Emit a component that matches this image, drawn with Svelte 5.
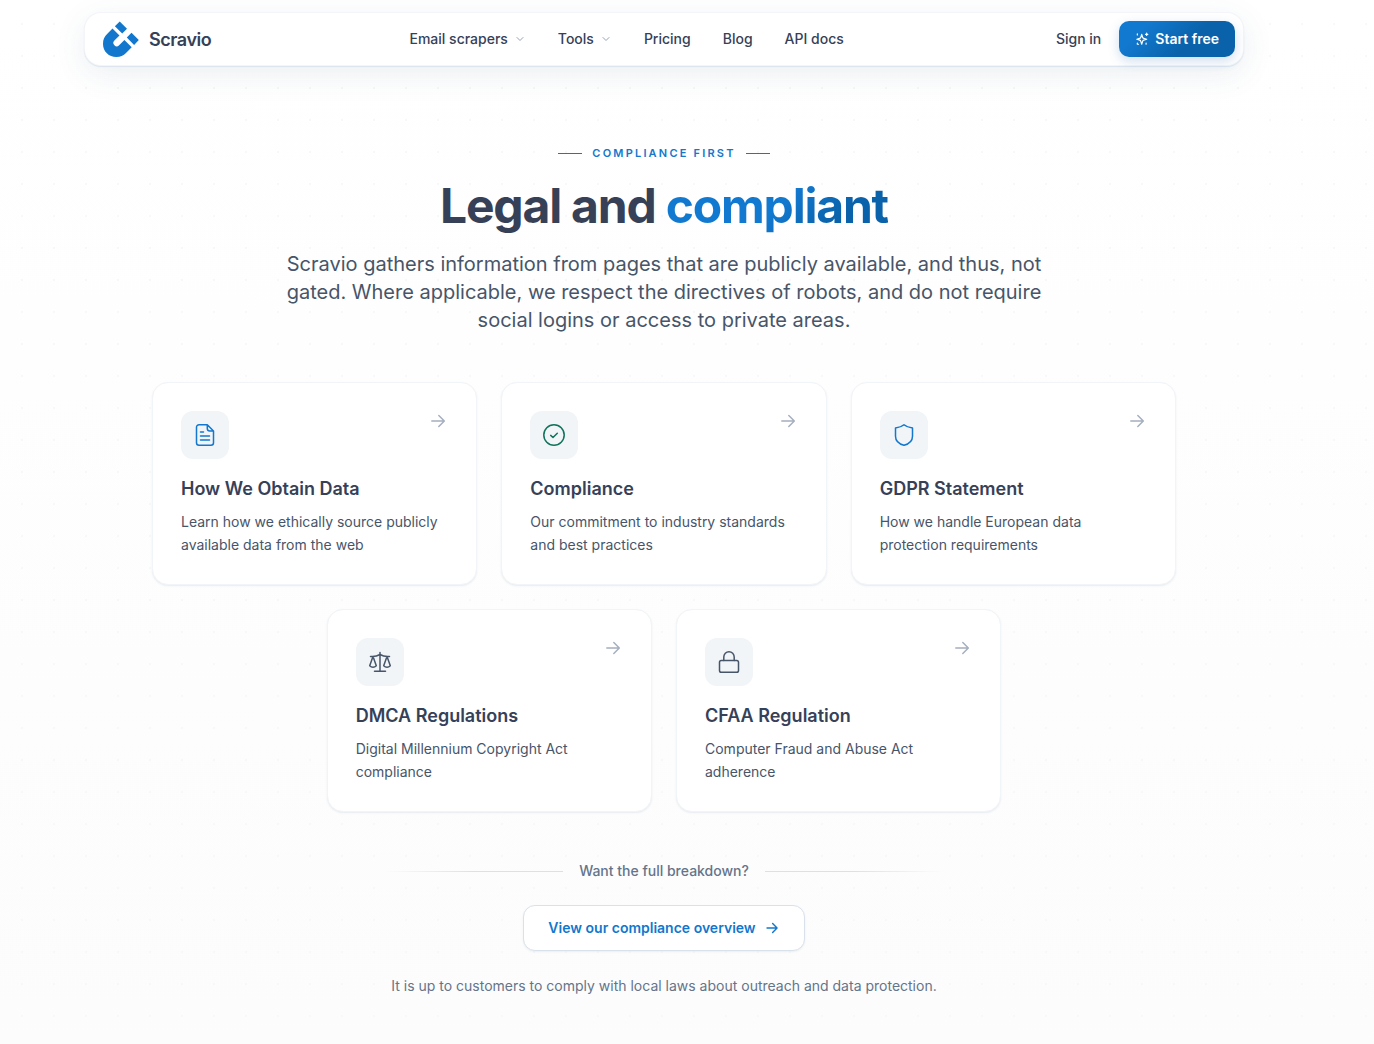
<script>
  const nav = [
    { label: 'Email scrapers', menu: true },
    { label: 'Tools', menu: true },
    { label: 'Pricing' },
    { label: 'Blog' },
    { label: 'API docs' }
  ];

  const cards = [
    { icon: 'file', tone: 'blue', title: 'How We Obtain Data', text: 'Learn how we ethically source publicly available data from the web' },
    { icon: 'check', tone: 'green', title: 'Compliance', text: 'Our commitment to industry standards and best practices' },
    { icon: 'shield', tone: 'blue', title: 'GDPR Statement', text: 'How we handle European data protection requirements' },
    { icon: 'scale', tone: 'slate', title: 'DMCA Regulations', text: 'Digital Millennium Copyright Act compliance' },
    { icon: 'lock', tone: 'slate', title: 'CFAA Regulation', text: 'Computer Fraud and Abuse Act adherence' }
  ];
</script>

{#snippet arrow()}
  <svg class="arrow" viewBox="0 0 20 20" aria-hidden="true"><path d="M3.8 10h12.400M10.800 4.500l5.500 5.500-5.500 5.500" /></svg>
{/snippet}

<div class="page">
  <header>
    <a class="brand" href="#home">
      <svg viewBox="0 0 36 36" aria-hidden="true">
        <path d="M16.7.5l7.300 7.200-4.800 4.700-7.300-7.200zM28.500 11.800l7.300 7.300-4.700 4.800-7.300-7.300z" />
        <path d="M9.500 7.500l7 7-5.100 5.100a3.300 3.300 0 0 0 4.700 4.700l5.300-5.300 7.300 7.300-5.700 5.700C20.400 34.600 17.500 36 13.300 36 6 36 0 30.300 0 22.900c0-4.200 1.500-7.200 4.100-9.800z" />
      </svg>
      Scravio
    </a>
    <nav>
      {#each nav as item}
        {#if item.menu}
          <button class="nav-item" type="button">
            {item.label}
            <svg viewBox="0 0 12 12" aria-hidden="true"><path d="M3 4.500l3 3 3-3" /></svg>
          </button>
        {:else}
          <a class="nav-item" href="#{item.label}">{item.label}</a>
        {/if}
      {/each}
    </nav>
    <div class="account">
      <a class="signin" href="#signin">Sign in</a>
      <a class="start" href="#start">
        <svg viewBox="0 0 24 24" aria-hidden="true">
          <path d="M11.500 4l1.500 5a3 3 0 0 0 2 2l5 1.500-5 1.500a3 3 0 0 0-2 2l-1.500 5-1.500-5a3 3 0 0 0-2-2L3 12.500 8 11a3 3 0 0 0 2-2zM20 2v4M18 4h4M4 3v2M4 19v2M6 21H4M19 19v2" />
        </svg>
        Start free
      </a>
    </div>
  </header>

  <main>
    <p class="eyebrow">Compliance first</p>
    <h1>Legal and <span>compliant</span></h1>
    <p class="lead">
      Scravio gathers information from pages that are publicly available, and thus, not gated. Where
      applicable, we respect the directives of robots, and do not require social logins or access to
      private areas.
    </p>

    <div class="cards">
      {#each cards as card}
        <a class="card" href="#{card.icon}">
          <span class="top">
            <span class="tile {card.tone}">
              <svg viewBox="0 0 24 24" aria-hidden="true">
                {#if card.icon === 'file'}
                  <path d="M14.300 1.800H6A2.500 2.500 0 0 0 3.500 4.300v15.400A2.500 2.500 0 0 0 6 22.200h12a2.500 2.500 0 0 0 2.500-2.500V8zM14.300 1.800V5.500A2.500 2.500 0 0 0 16.800 8h3.700M7.500 9h3M7.500 13h9M7.500 17h9" />
                {:else if card.icon === 'check'}
                  <circle cx="12" cy="12" r="10.200" /><path d="M8.700 12.400l2.300 2.100 4.300-4.300" />
                {:else if card.icon === 'shield'}
                  <path d="M12 1.700c2 1.700 5 2.800 8.500 3.300v8.200c0 4.600-3.500 7.700-8.500 9.100-5-1.400-8.500-4.500-8.500-9.100V5C7 4.500 10 3.400 12 1.700z" />
                {:else if card.icon === 'scale'}
                  <path d="M12 2.500v18.700M6.500 21.200h11M2.500 6.500h1.800c3 0 5.700-.8 7.700-2 2 1.200 4.700 2 7.700 2h1.800M5 6.500l-3.300 9.200c1.900 1.900 4.700 1.900 6.600 0zM19 6.500l-3.300 9.200c1.900 1.900 4.700 1.900 6.600 0z" />
                {:else}
                  <rect x="2.500" y="10.500" width="19" height="11.700" rx="1.800" /><path d="M6.800 10.500V7a5.200 5.200 0 0 1 10.400 0v3.500" />
                {/if}
              </svg>
            </span>
            {@render arrow()}
          </span>
          <strong>{card.title}</strong>
          <span class="text">{card.text}</span>
        </a>
      {/each}
    </div>

    <p class="divider">Want the full breakdown?</p>
    <a class="overview" href="#overview">View our compliance overview {@render arrow()}</a>
    <p class="note">It is up to customers to comply with local laws about outreach and data protection.</p>
  </main>
</div>

<style>
  :global(body) {
    margin: 0;
    font-family: Inter, 'Liberation Sans', sans-serif;
    color: #334155;
  }
  .page {
    box-sizing: border-box;
    min-height: 100vh;
    padding: 13px 46px 48px 0;
    background:
      radial-gradient(circle, #f6f8fa 1px, transparent 1px) 6px 8px / 32px 32px,
      linear-gradient(#ffffff, #fcfcfc);
  }
  a { color: inherit; text-decoration: none; }
  svg {
    fill: none;
    stroke: currentColor;
    stroke-linecap: round;
    stroke-linejoin: round;
  }
  header {
    box-sizing: border-box;
    max-width: 1158px;
    height: 52px;
    margin: 0 auto;
    padding: 0 8px 0 18px;
    display: flex;
    justify-content: space-between;
    align-items: center;
    background: #fff;
    border-radius: 16px;
    box-shadow: 0 0 0 1px #f3f5f8, 0 1px 1px 1px #dbe5ef, 0 8px 32px rgba(51, 85, 120, 0.1);
  }
  .brand {
    display: flex;
    align-items: center;
    gap: 10px;
    font-size: 18px;
    font-weight: 600;
    letter-spacing: -0.025em;
    color: #364158;
  }
  .brand svg { width: 36px; height: 36px; fill: #1277cd; stroke: none; }
  nav { display: flex; gap: 32px; }
  .nav-item, .signin { font: 500 14px/20px Inter, 'Liberation Sans', sans-serif; color: #364158; }
  button.nav-item {
    display: flex;
    align-items: center;
    gap: 6px;
    padding: 0;
    border: 0;
    background: none;
    cursor: pointer;
  }
  .nav-item svg { width: 12px; height: 12px; color: #94a3b8; }
  .account { display: flex; align-items: center; gap: 4px; }
  .signin { padding: 8px 14px; }
  .start {
    display: flex;
    align-items: center;
    gap: 6px;
    padding: 8px 16px;
    border-radius: 10px;
    background: linear-gradient(135deg, #1279d0 20%, #0a62aa 60%);
    box-shadow: 0 4px 12px rgba(18, 90, 170, 0.2);
    color: #fff;
    font-size: 14px;
    line-height: 20px;
    font-weight: 600;
  }
  .start svg { width: 14px; height: 14px; stroke-width: 2; }
  main { display: flex; flex-direction: column; align-items: center; padding: 79px 24px 0; text-align: center; }
  p, h1 { margin: 0; }
  .eyebrow {
    display: flex;
    align-items: center;
    gap: 10px;
    font-size: 11px;
    line-height: 18px;
    font-weight: 600;
    letter-spacing: 0.2em;
    text-transform: uppercase;
    color: #1277cd;
  }
  .eyebrow::before, .eyebrow::after { content: ''; width: 24px; height: 1px; background: #1277cd; }
  h1 {
    margin-top: 18px;
    font-size: 48px;
    line-height: 52px;
    font-weight: 700;
    letter-spacing: -0.025em;
    color: #364158;
  }
  h1 span {
    padding-bottom: 4px;
    background: linear-gradient(135deg, #1279d0 50%, #0a62aa 75%);
    background-clip: text;
    color: transparent;
  }
  .lead { max-width: 768px; margin-top: 18px; font-size: 20px; line-height: 28px; color: #475569; }
  .cards {
    width: 100%;
    max-width: 1024px;
    margin-top: 48px;
    display: flex;
    flex-wrap: wrap;
    justify-content: center;
    gap: 24px;
    text-align: left;
  }
  .card {
    box-sizing: border-box;
    width: calc((100% - 48px) / 3);
    padding: 28px;
    border: 1px solid #f1f4f8;
    border-radius: 16px;
    background: #fff;
    box-shadow: 0 1px 2px rgba(51, 85, 120, 0.1);
  }
  .top { display: flex; justify-content: space-between; align-items: flex-start; }
  .top .arrow { width: 20px; height: 20px; color: #a5afbf; stroke-width: 1.500; }
  .tile {
    width: 48px;
    height: 48px;
    display: grid;
    place-items: center;
    border-radius: 12px;
    background: #f1f5f8;
  }
  .tile svg { width: 24px; height: 24px; stroke-width: 1.500; }
  .blue { color: #1277cd; }
  .green { color: #10735c; }
  .slate { color: #475569; }
  .card strong { display: block; margin-top: 18px; font-size: 18px; line-height: 24px; font-weight: 600; color: #364158; }
  .text { display: block; margin-top: 9px; font-size: 14px; line-height: 23px; color: #475569; }
  .divider {
    width: 100%;
    max-width: 560px;
    margin-top: 49px;
    display: flex;
    align-items: center;
    gap: 16px;
    font-size: 14px;
    line-height: 20px;
    font-weight: 500;
    color: #64748b;
  }
  .divider::before, .divider::after {
    content: '';
    flex: 1;
    height: 1px;
    background: linear-gradient(90deg, transparent, #d9e2ec 50%);
  }
  .divider::after { background: linear-gradient(270deg, transparent, #d9e2ec 50%); }
  .overview {
    display: flex;
    align-items: center;
    gap: 8px;
    margin-top: 24px;
    padding: 12px 24px;
    border: 1px solid #d9e1eb;
    border-radius: 12px;
    background: #fff;
    box-shadow: 0 1px 2px rgba(51, 85, 120, 0.08);
    font-size: 14px;
    line-height: 20px;
    font-weight: 600;
    color: #1277cd;
  }
  .overview .arrow { width: 16px; height: 16px; stroke-width: 1.800; }
  .note { margin-top: 24px; font-size: 14px; line-height: 22px; color: #64748b; }
</style>
